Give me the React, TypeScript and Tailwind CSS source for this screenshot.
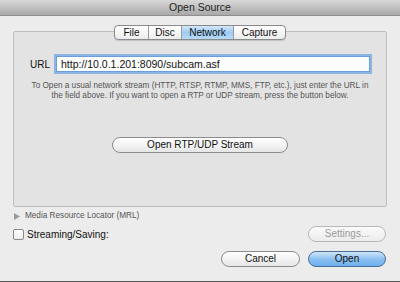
import React, { useState } from 'react';

const tabs = ['File', 'Disc', 'Network', 'Capture'];
const tabWidths: Record<string, string> = {
  File: 'w-[33px]',
  Disc: 'w-[33px]',
  Network: 'w-[52px]',
  Capture: 'w-[52px]',
};

const AquaButton: React.FC<{ label: string; width: string; primary?: boolean; disabled?: boolean }> = ({
  label,
  width,
  primary,
  disabled,
}) => (
  <button
    disabled={disabled}
    className={`${width} h-[16px] rounded-full border text-[10px] leading-none flex items-center justify-center ${
      primary
        ? 'border-[#4b6c99] bg-gradient-to-b from-[#cfe6fb] via-[#8cc0ef] to-[#6cb0f0] text-[#111]'
        : disabled
          ? 'border-[#b8b8b8] bg-gradient-to-b from-[#fafafa] to-[#ececec] text-[#9a9a9a]'
          : 'border-[#8c8c8c] bg-gradient-to-b from-[#ffffff] via-[#f3f3f3] to-[#e6e6e6] text-[#111]'
    }`}
  >
    {label}
  </button>
);

export default function App() {
  const [active, setActive] = useState('Network');
  const [url, setUrl] = useState('http://10.0.1.201:8090/subcam.asf');
  const [streaming, setStreaming] = useState(false);

  return (
    <div
      className="w-[400px] h-[282px] bg-[#ececec] flex flex-col overflow-hidden text-[#111]"
      style={{ fontFamily: '"Liberation Sans", Arial, sans-serif' }}
    >
      {/* title bar */}
      <div className="h-[16px] shrink-0 bg-gradient-to-b from-[#d8d8d8] to-[#a9a9a9] border-b border-[#8e8e8e] flex items-center justify-center text-[10.5px] text-[#222]">
        Open Source
      </div>

      {/* tab panel */}
      <div className="relative mt-[15px] mx-[13px] h-[176px] bg-[#e3e3e3] border border-[#bdbdbd] rounded-[2px] flex flex-col">
        <div className="absolute left-[100px] -top-[7px] h-[15px] flex rounded-[4px] border border-[#8a8a8a] overflow-hidden bg-gradient-to-b from-[#ffffff] to-[#ececec] shadow-[0_1px_1px_rgba(0,0,0,0.15)]">
          {tabs.map((t, i) => (
            <button
              key={t}
              onClick={() => setActive(t)}
              className={`${tabWidths[t]} h-full text-[10px] leading-none flex items-center justify-center ${
                i > 0 ? 'border-l border-[#9a9a9a]' : ''
              } ${active === t ? 'bg-gradient-to-b from-[#d4e8fb] via-[#9fcbf3] to-[#b6dbfa] text-[#111]' : 'text-[#111]'}`}
            >
              {t}
            </button>
          ))}
        </div>

        <div className="mt-[24px] flex items-center">
          <span className="w-[38px] text-right text-[10px] pr-[2px]">URL</span>
          <input
            value={url}
            onChange={(e) => setUrl(e.target.value)}
            className="ml-[4px] w-[314px] h-[16px] bg-white border border-[#6a9fd8] shadow-[0_0_0_2px_#8bb6e4] px-[4px] text-[10.5px] text-[#111] outline-none"
          />
        </div>

        <p className="mt-[9px] text-center text-[8.2px] leading-[10px] text-[#555]">
          To Open a usual network stream (HTTP, RTSP, RTMP, MMS, FTP, etc.), just enter the URL in
          <br />
          the field above. If you want to open a RTP or UDP stream, press the button below.
        </p>

        <div className="mt-[36px] flex justify-center">
          <AquaButton label="Open RTP/UDP Stream" width="w-[176px]" />
        </div>
      </div>

      {/* bottom */}
      <div className="mt-[4px] ml-[14px] flex items-center gap-[5px] h-[10px] text-[8.2px] text-[#555]">
        <svg width="6" height="7" viewBox="0 0 6 7">
          <path d="M0 0 L6 3.5 L0 7 Z" fill="#9a9a9a" />
        </svg>
        <span>Media Resource Locator (MRL)</span>
      </div>

      <div className="mt-[5px] mx-[13px] flex items-center justify-between">
        <label className="flex items-center gap-[3px] text-[10px]">
          <input
            type="checkbox"
            checked={streaming}
            onChange={(e) => setStreaming(e.target.checked)}
            className="appearance-none w-[11px] h-[11px] rounded-[2px] border border-[#8a8a8a] bg-gradient-to-b from-white to-[#ececec] m-0"
          />
          Streaming/Saving:
        </label>
        <div className="mr-[1px]">
          <AquaButton label="Settings..." width="w-[78px]" disabled />
        </div>
      </div>

      <div className="mt-[9px] mr-[14px] flex justify-end gap-[8px]">
        <AquaButton label="Cancel" width="w-[79px]" />
        <AquaButton label="Open" width="w-[78px]" primary />
      </div>

      <div className="mt-auto h-[1px] bg-[#555]" />
    </div>
  );
}
